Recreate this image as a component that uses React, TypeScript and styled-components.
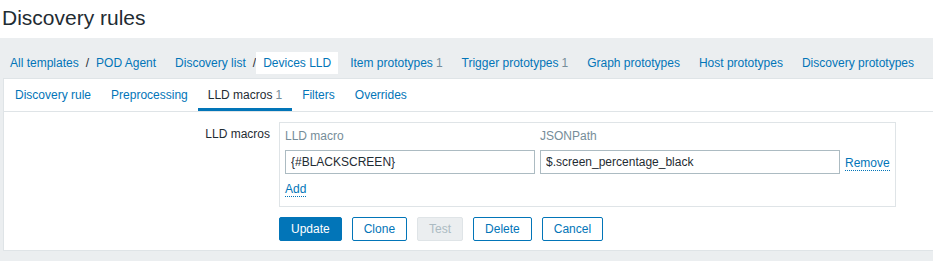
import React from 'react';
import styled, { createGlobalStyle } from 'styled-components';

const GlobalStyle = createGlobalStyle`
  html, body {
    margin: 0;
    padding: 0;
    background: #ffffff;
    overflow: hidden;
  }
  body {
    font-family: 'Liberation Sans', Arial, sans-serif;
    font-size: 12px;
    color: #1f2c33;
  }
  * {
    box-sizing: border-box;
  }
`;

const Page = styled.div`
  display: flex;
  flex-direction: column;
  width: 100%;
  height: 261px;
`;

const Header = styled.header`
  height: 38px;
  padding: 6px 0 0 2px;
  background: #ffffff;
`;

const Title = styled.h1`
  margin: 0;
  font-size: 21px;
  line-height: 24px;
  font-weight: normal;
  color: #1f2c33;
`;

const Wrapper = styled.main`
  flex: 1;
  display: flex;
  flex-direction: column;
  padding: 14px 0 0 3px;
  background: #ebeef0;
`;

const Nav = styled.nav`
  display: flex;
  align-items: center;
  gap: 5px;
  height: 22px;
  margin-bottom: 4px;
`;

const NavGroup = styled.div`
  display: flex;
  align-items: center;
`;

const NavItem = styled.a<{ $selected?: boolean }>`
  display: block;
  height: 22px;
  line-height: 22px;
  padding: 0 7px;
  color: #0275b8;
  text-decoration: none;
  white-space: nowrap;
  background: ${({ $selected }) => ($selected ? '#ffffff' : 'transparent')};
`;

const Separator = styled.span`
  color: #1f2c33;
  line-height: 22px;
`;

const Count = styled.span`
  color: #768d99;
  margin-left: 3px;
`;

const Panel = styled.section`
  background: #ffffff;
  border: 1px solid #dfe4e7;
  border-right: none;
  padding-bottom: 9px;
`;

const TabList = styled.ul`
  display: flex;
  list-style: none;
  margin: 0;
  padding: 0 0 0 1px;
  border-bottom: 1px solid #dfe4e7;
`;

const Tab = styled.li<{ $active?: boolean }>`
  height: 32px;
  line-height: 32px;
  padding: 0 10px;
  white-space: nowrap;
  color: ${({ $active }) => ($active ? '#1f2c33' : '#0275b8')};
  box-shadow: ${({ $active }) => ($active ? 'inset 0 -3px 0 #0275b8' : 'none')};
`;

const Form = styled.form`
  display: grid;
  grid-template-columns: 266px auto;
  column-gap: 9px;
  row-gap: 10px;
  padding-top: 10px;
  align-items: start;
  justify-content: start;
`;

const Label = styled.label`
  text-align: right;
  padding-top: 5px;
  line-height: 14px;
`;

const MacroTable = styled.div`
  display: inline-grid;
  grid-template-columns: 250px 300px auto;
  column-gap: 5px;
  padding: 5px;
  border: 1px solid #dfe4e7;
  width: fit-content;
`;

const HeadCell = styled.div`
  color: #768d99;
  line-height: 14px;
  padding: 1px 0 7px;
`;

const TextInput = styled.input`
  height: 24px;
  width: 100%;
  padding: 0 5px;
  border: 1px solid #acbbc2;
  background: #ffffff;
  font-family: inherit;
  font-size: 12px;
  color: #1f2c33;
  outline: none;
`;

const ActionCell = styled.div`
  align-self: center;
  padding-top: 2px;
`;

const DottedLink = styled.a`
  color: #0275b8;
  text-decoration: none;
  border-bottom: 1px dotted #0275b8;
  line-height: 14px;
  display: inline-block;
`;

const AddCell = styled.div`
  grid-column: 1 / -1;
  padding: 8px 0 4px;
`;

const Buttons = styled.div`
  grid-column: 2;
  display: flex;
  gap: 10px;
`;

const Button = styled.button<{ $variant?: 'primary' | 'alt' | 'disabled' }>`
  height: 24px;
  padding: 0 11px;
  font-family: inherit;
  font-size: 12px;
  border: 1px solid
    ${({ $variant }) => ($variant === 'disabled' ? '#dfe4e7' : '#0275b8')};
  border-radius: 2px;
  background: ${({ $variant }) =>
    $variant === 'primary' ? '#0275b8' : $variant === 'disabled' ? '#ebeef0' : '#ffffff'};
  color: ${({ $variant }) =>
    $variant === 'primary' ? '#ffffff' : $variant === 'disabled' ? '#acbbc2' : '#0275b8'};
  cursor: ${({ $variant }) => ($variant === 'disabled' ? 'default' : 'pointer')};
`;

const tabs = [
  { name: 'Discovery rule' },
  { name: 'Preprocessing' },
  { name: 'LLD macros', count: 1, active: true },
  { name: 'Filters' },
  { name: 'Overrides' },
];

const prototypes = [
  { name: 'Item prototypes', count: 1 },
  { name: 'Trigger prototypes', count: 1 },
  { name: 'Graph prototypes' },
  { name: 'Host prototypes' },
  { name: 'Discovery prototypes' },
];

const App: React.FC = () => {
  return (
    <>
      <GlobalStyle />
      <Page>
        <Header>
          <Title>Discovery rules</Title>
        </Header>
        <Wrapper>
          <Nav>
            <NavGroup>
              <NavItem>All templates</NavItem>
              <Separator>/</Separator>
              <NavItem>POD Agent</NavItem>
            </NavGroup>
            <NavGroup>
              <NavItem>Discovery list</NavItem>
              <Separator>/</Separator>
              <NavItem $selected>Devices LLD</NavItem>
            </NavGroup>
            {prototypes.map((p) => (
              <NavItem key={p.name}>
                {p.name}
                {p.count !== undefined && <Count>{p.count}</Count>}
              </NavItem>
            ))}
          </Nav>
          <Panel>
            <TabList>
              {tabs.map((t) => (
                <Tab key={t.name} $active={t.active}>
                  {t.name}
                  {t.count !== undefined && <Count>{t.count}</Count>}
                </Tab>
              ))}
            </TabList>
            <Form onSubmit={(e) => e.preventDefault()}>
              <Label>LLD macros</Label>
              <MacroTable>
                <HeadCell>LLD macro</HeadCell>
                <HeadCell>JSONPath</HeadCell>
                <HeadCell />
                <TextInput defaultValue="{#BLACKSCREEN}" />
                <TextInput defaultValue="$.screen_percentage_black" />
                <ActionCell>
                  <DottedLink>Remove</DottedLink>
                </ActionCell>
                <AddCell>
                  <DottedLink>Add</DottedLink>
                </AddCell>
              </MacroTable>
              <Buttons>
                <Button type="button" $variant="primary">Update</Button>
                <Button type="button" $variant="alt">Clone</Button>
                <Button type="button" $variant="disabled" disabled>Test</Button>
                <Button type="button" $variant="alt">Delete</Button>
                <Button type="button" $variant="alt">Cancel</Button>
              </Buttons>
            </Form>
          </Panel>
        </Wrapper>
      </Page>
    </>
  );
};

export default App;
